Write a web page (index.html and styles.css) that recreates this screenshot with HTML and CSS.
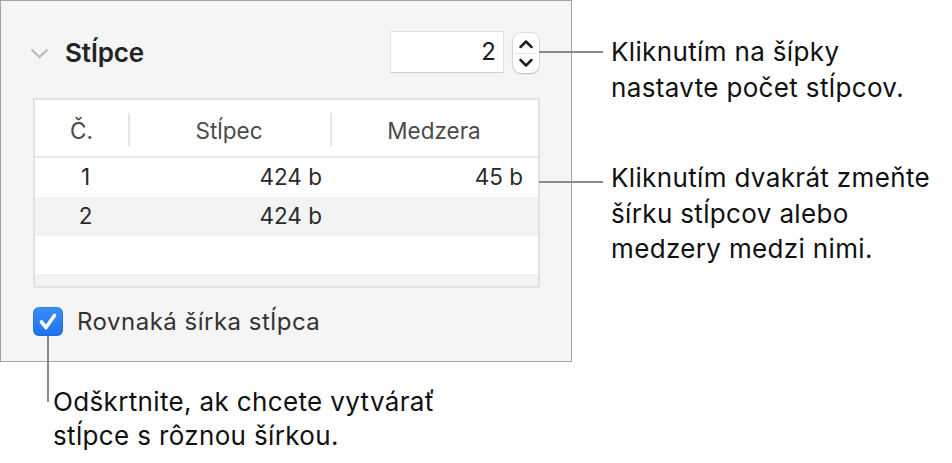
FILE: index.html
```html
<!DOCTYPE html>
<html>
<head>
    <title>Stĺpce</title>
    <link rel="stylesheet" href="styles.css">
</head>
<body>
    <div class="page">
        <div class="top">
            <section class="panel">
                <div class="panel-head">
                    <svg class="disclosure" width="17" height="9" viewBox="0 0 17 9">
                        <path d="M1 1 L8.5 8 L16 1" fill="none" stroke="#b4b4b4" stroke-width="1.8" stroke-linecap="round" stroke-linejoin="round"/>
                    </svg>
                    <h2>Stĺpce</h2>
                    <div class="count">
                        <div class="count-field">2</div>
                        <div class="stepper">
                            <svg width="26" height="40" viewBox="0 0 26 40">
                                <path d="M7.5 14 L13 8.5 L18.5 14" fill="none" stroke="#1e1e1e" stroke-width="2.5" stroke-linecap="round" stroke-linejoin="round"/>
                                <line x1="2" y1="20.5" x2="24" y2="20.5" stroke="#e6e6e6" stroke-width="1"/>
                                <path d="M7.5 27 L13 32.5 L18.5 27" fill="none" stroke="#1e1e1e" stroke-width="2.5" stroke-linecap="round" stroke-linejoin="round"/>
                            </svg>
                        </div>
                    </div>
                </div>

                <div class="cols-table">
                    <div class="th">Č.</div>
                    <div class="th sep">Stĺpec</div>
                    <div class="th sep">Medzera</div>

                    <div class="td num">1</div>
                    <div class="td width">424 b</div>
                    <div class="td gap">45 b</div>

                    <div class="td num alt">2</div>
                    <div class="td width alt">424 b</div>
                    <div class="td gap alt"></div>

                    <div class="td empty"></div>
                    <div class="td empty"></div>
                    <div class="td empty"></div>

                    <div class="td stub alt"></div>
                    <div class="td stub alt"></div>
                    <div class="td stub alt"></div>
                </div>

                <label class="check">
                    <span class="check-box">
                        <svg width="30" height="29" viewBox="0 0 30 29">
                            <path d="M8.5 15 L13 20.5 L21.5 8.5" fill="none" stroke="#fff" stroke-width="3.6" stroke-linecap="round" stroke-linejoin="round"/>
                        </svg>
                    </span>
                    Rovnaká šírka stĺpca
                </label>
            </section>

            <div class="notes">
                <p class="note note-arrows">Kliknutím na šípky<br>nastavte počet stĺpcov.</p>
                <p class="note note-table">Kliknutím dvakrát zmeňte<br>šírku stĺpcov alebo<br>medzery medzi nimi.</p>
            </div>
        </div>

        <p class="note-bottom">Odškrtnite, ak chcete vytvárať<br>stĺpce s rôznou šírkou.</p>
    </div>
</body>
</html>
```

FILE: styles.css
```css
body {
    margin: 0;
    background: #fff;
    font-family: 'Inter', 'Roboto', sans-serif;
    color: #1b1b1b;
}
.page {
    width: 952px;
    height: 463px;
    overflow: hidden;
}
.top {
    display: flex;
    align-items: flex-start;
}
.panel {
    width: 572px;
    height: 362px;
    box-sizing: border-box;
    background: #f5f5f5;
    border: 1px solid #a3a3a3;
    padding: 30px 32px 0 32px;
}
.panel-head {
    display: flex;
    align-items: center;
    height: 42px;
}
.disclosure {
    margin-left: -2px;
    margin-top: 3px;
}
.panel-head h2 {
    margin: 0 0 0 17px;
    font-size: 26px;
    font-weight: 600;
    color: #242424;
    letter-spacing: -0.1px;
}
.count {
    margin-left: auto;
    display: flex;
    align-items: center;
    gap: 9px;
}
.count-field {
    width: 114px;
    height: 42px;
    box-sizing: border-box;
    background: #fff;
    border: 1px solid #e2e2e2;
    border-bottom-color: #cfcfcf;
    text-align: right;
    padding-right: 7px;
    font-size: 24px;
    line-height: 40px;
    color: #1b1b1b;
}
.stepper {
    width: 26px;
    height: 40px;
    margin-top: 2px;
    background: #fff;
    border-radius: 8px;
    box-shadow: 0 0 0 1px rgba(0, 0, 0, 0.07), 0 1px 2px rgba(0, 0, 0, 0.18);
}
.stepper svg {
    display: block;
}

/* the column table */
.cols-table {
    margin-top: 25px;
    width: 507px;
    height: 190px;
    box-sizing: border-box;
    border: 2px solid #e2e2e2;
    display: grid;
    grid-template-columns: 93px 202px 1fr;
    grid-template-rows: 58px 39px 39px 38px 1fr;
    background: #fff;
    font-size: 22.5px;
    overflow: hidden;
}
.th {
    position: relative;
    display: flex;
    align-items: center;
    justify-content: center;
    color: #4a4a4a;
    border-bottom: 2px solid #e8e8e8;
    padding-top: 4px;
}
.th.sep::before {
    content: "";
    position: absolute;
    left: 0;
    top: 13px;
    bottom: 10px;
    width: 2px;
    background: #e6e6e6;
}
.td {
    display: flex;
    align-items: center;
    color: #2a2a2a;
    padding-bottom: 2px;
}
.td.alt {
    background: #f2f3f3;
}
.td.num {
    justify-content: center;
    padding-left: 8px;
}
.td.width {
    justify-content: flex-end;
    padding-right: 8px;
}
.td.gap {
    justify-content: flex-end;
    padding-right: 15px;
}

.check {
    display: flex;
    align-items: center;
    gap: 14px;
    margin-top: 19px;
    font-size: 24px;
    letter-spacing: 0.5px;
    color: #333;
}
.check-box {
    position: relative;
    width: 30px;
    height: 29px;
    border-radius: 6px;
    background: linear-gradient(#3b8cf8, #1f72f0);
    box-shadow: inset 0 0 0 1px rgba(0, 0, 0, 0.08);
}
.check-box svg {
    display: block;
}
.check-box::after {
    content: "";
    position: absolute;
    left: 14px;
    top: 29px;
    width: 2px;
    height: 66px;
    background: #8a8a8a;
}

/* callouts */
.notes {
    margin-left: 39px;
    padding-top: 34px;
}
.note {
    position: relative;
    margin: 0;
    font-size: 26px;
    letter-spacing: 0.35px;
    line-height: 35.5px;
    color: #111;
}
.note::before {
    content: "";
    position: absolute;
    left: -72px;
    width: 64px;
    height: 2px;
    background: #8a8a8a;
}
.note-arrows::before {
    top: 17px;
}
.note-table {
    margin-top: 55px;
}
.note-table::before {
    top: 21px;
}
.note-bottom {
    margin: 23px 0 0 53px;
    font-size: 26px;
    letter-spacing: 0.35px;
    line-height: 34px;
    color: #111;
}
```
